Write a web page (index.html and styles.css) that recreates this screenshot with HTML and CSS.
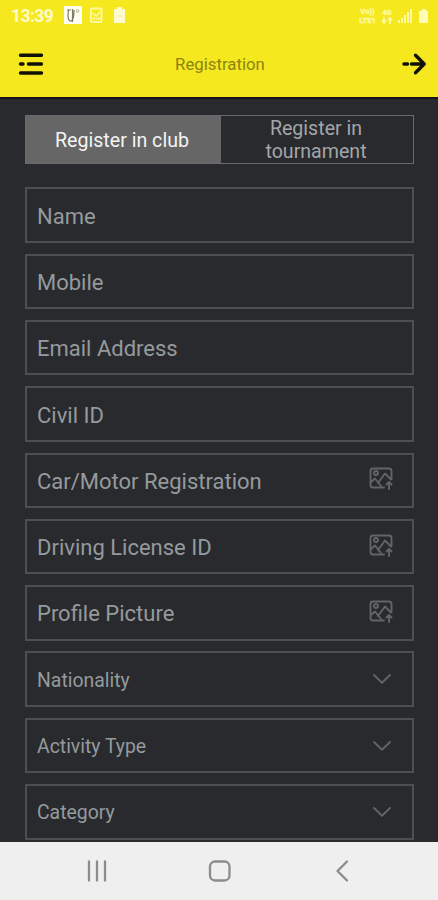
FILE: index.html
```html
<!DOCTYPE html>
<html lang="en">
<head>
<meta charset="utf-8">
<title>Registration</title>
<link rel="stylesheet" href="styles.css">
</head>
<body>
<svg class="defs" aria-hidden="true">
  <symbol id="picture" viewBox="0 0 26 26">
    <path d="M16 21.5H5Q2.5 21.5 2.5 19V5Q2.5 2.5 5 2.5H21Q23.5 2.5 23.5 5V13"/>
    <circle cx="8" cy="7" r="2"/>
    <path d="M3 16L7 12.5L13 20M10 17L17 7.5L23 13.5M21 23V16.5M18.5 18.5L21 16L23.5 18.5"/>
  </symbol>
  <symbol id="chevron" viewBox="0 0 20 12"><path d="M2 2L10 9.8L18 2"/></symbol>
</svg>
<div class="screen">
  <header class="top">
    <div class="status">
      <span class="time">13:39</span>
      <svg class="notices" width="66" height="20" viewBox="0 0 66 20">
        <rect x="0" y="0" width="18" height="18" fill="#fffef0"/>
        <path d="M4.5 4Q3 14 6 15Q10 16 10 4M8.5 3V16M3 4H7" fill="none" stroke="#777966" stroke-width="1.2"/>
        <circle cx="13.5" cy="5" r="1.3" fill="none" stroke="#b5b48c"/>
        <rect x="27" y="2.5" width="10.5" height="13.5" rx="1" fill="none" stroke="#fff9a0" stroke-width="2"/>
        <path d="M29 7L32 10L36 6M30 14V11M32.5 14V12M35 14V11" fill="none" stroke="#fff9a0" stroke-width="1.7"/>
        <path d="M53 1H58V3H61V17H50V3H53Z" fill="#fffbd0"/>
        <path d="M53 10H58" stroke="#eee79a"/>
      </svg>
      <span class="net volte"><span>Vo))</span><span>LTE1</span></span>
      <span class="net four"><span>4G</span><svg width="12" height="7" viewBox="0 0 12 7"><path d="M1 3L3 6L5 3M3 0V5M7 3L9 1L11 3M9 1V7" fill="none" stroke="#fff9a0" stroke-width="1.8"/></svg></span>
      <svg class="signal" width="32" height="16" viewBox="0 0 32 16">
        <path d="M1 15V12H3V15ZM4 15V10H6V15ZM7 15V7H9V15ZM10 15V4H12V15ZM13 15V1H15V15Z" fill="#fff9a0"/>
        <path d="M25 1H29V3H31V15H22V3H25Z" fill="#fffbb8"/>
      </svg>
    </div>
    <div class="appbar">
      <svg width="26" height="24" viewBox="0 0 26 24" class="bold"><path d="M2.5 3.2H23.5M2.5 12H5M10.5 12H23.5M2.5 21H23.5"/></svg>
      <h1>Registration</h1>
      <svg width="26" height="24" viewBox="0 0 26 24" class="bold"><path d="M2 12H5.5M9.5 12H21.5M13.5 3.2L22.2 12L13.5 20.8"/></svg>
    </div>
  </header>
  <main>
    <div class="tabs">
      <button class="tab active">Register in club</button>
      <button class="tab">Register in<br>tournament</button>
    </div>
    <div class="fields">
      <div class="field">Name</div>
      <div class="field">Mobile</div>
      <div class="field">Email Address</div>
      <div class="field">Civil ID</div>
      <div class="field">Car/Motor Registration<svg class="pic"><use href="#picture"/></svg></div>
      <div class="field">Driving License ID<svg class="pic"><use href="#picture"/></svg></div>
      <div class="field">Profile Picture<svg class="pic"><use href="#picture"/></svg></div>
      <div class="field select">Nationality<svg class="chev"><use href="#chevron"/></svg></div>
      <div class="field select">Activity Type<svg class="chev"><use href="#chevron"/></svg></div>
      <div class="field select">Category<svg class="chev"><use href="#chevron"/></svg></div>
    </div>
  </main>
  <nav>
    <svg width="24" height="24" viewBox="0 0 24 24"><path d="M4 2.5V21.5M12 2.5V21.5M20 2.5V21.5"/></svg>
    <svg width="24" height="24" viewBox="0 0 24 24"><rect x="2" y="2.5" width="19.5" height="19" rx="5"/></svg>
    <svg width="24" height="24" viewBox="0 0 24 24"><path d="M16 2.5L6.5 12L16 21.5"/></svg>
  </nav>
</div>
</body>
</html>
```
FILE: styles.css
```css
* { box-sizing: border-box; }
body { margin: 0; font-family: Roboto, "Liberation Sans", sans-serif; background: #292a2e; }
.defs { display: none; }
.screen { width: 438px; height: 900px; overflow: hidden; display: flex; flex-direction: column; }
.top { height: 99px; flex: none; background: #f5e81e; border-bottom: 2px solid #15131c; }
.status { height: 32px; display: flex; align-items: center; padding: 0 9px 0 11px; color: #fffbc8; }
.time { width: 53px; font-size: 17.5px; font-weight: 700; letter-spacing: -0.6px; }
.notices { margin-right: auto; }
.net { display: flex; flex-direction: column; align-items: center; font-size: 7.5px; line-height: 9px; font-weight: 900; color: #fff9a0; -webkit-text-stroke: 0.3px #fff9a0; }
.volte { width: 19px; margin-right: 3px; }
.four { width: 14px; margin-right: 3px; }
.appbar { height: 64px; display: flex; align-items: center; justify-content: space-between; padding: 0 10px 0 18px; }
h1 { margin: 0 0 0 -6px; font-size: 16.8px; font-weight: 400; color: #8b8415; }
.bold { fill: none; stroke: #111108; stroke-width: 3.4; stroke-linecap: round; stroke-linejoin: round; }
main { flex: none; height: 743px; padding: 16px 24px 0 25px; overflow: hidden; }
.tabs { display: flex; height: 49px; margin-bottom: 23.4px; border: 1px solid #6a6b6d; }
.tab { flex: 1; border: 0; background: #282a2d; color: #a3a6a9; font: 400 19.6px/23px Roboto, sans-serif; padding: 1px 2px 0 0; }
.tab.active { flex: 0 0 195px; background: #666; color: #f4f4f4; padding-right: 3px; }
.fields { display: flex; flex-direction: column; gap: 10.8px; }
.field { height: 55.5px; flex: none; display: flex; align-items: center; justify-content: space-between; padding: 2px 18px 0 10px; border: 2px solid #4e4f52; color: #959a9d; font-size: 22px; }
.select { font-size: 19.4px; }
.field svg { fill: none; stroke: #636466; stroke-width: 1.9; stroke-linecap: round; stroke-linejoin: round; }
.pic { width: 26px; height: 26px; margin-top: -4px; }
.chev { width: 20px; height: 12px; margin: -2px 2px 0 0; }
nav { height: 58px; flex: none; display: flex; align-items: center; justify-content: space-between; padding: 0 83px 0 85px; background: #efefef; }
nav svg { fill: none; stroke: #8c8c8c; stroke-width: 2.3; stroke-linecap: round; stroke-linejoin: round; }
```
